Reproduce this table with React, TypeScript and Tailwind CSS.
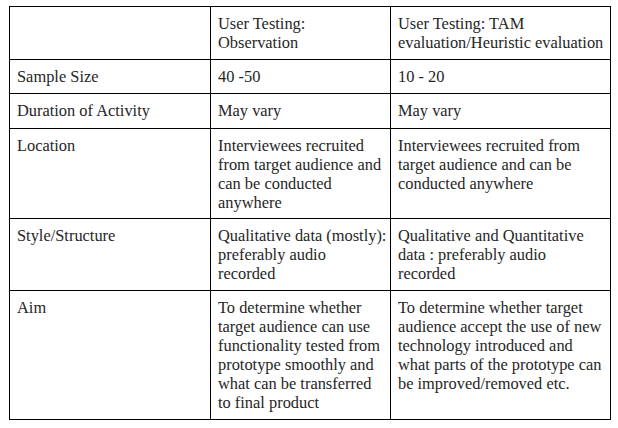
import React from "react";

const rows: { label: string; a: string[]; b: string[] }[] = [
  { label: "Sample Size", a: ["40 -50"], b: ["10 - 20"] },
  { label: "Duration of Activity", a: ["May vary"], b: ["May vary"] },
  {
    label: "Location",
    a: ["Interviewees recruited", "from target audience and", "can be conducted", "anywhere"],
    b: ["Interviewees recruited from", "target audience and can be", "conducted anywhere"],
  },
  {
    label: "Style/Structure",
    a: ["Qualitative data (mostly):", "preferably audio", "recorded"],
    b: ["Qualitative and Quantitative", "data : preferably audio", "recorded"],
  },
  {
    label: "Aim",
    a: [
      "To determine whether",
      "target audience can use",
      "functionality tested from",
      "prototype smoothly and",
      "what can be transferred",
      "to final product",
    ],
    b: [
      "To determine whether target",
      "audience accept the use of new",
      "technology introduced and",
      "what parts of the prototype can",
      "be improved/removed etc.",
    ],
  },
];

function Lines({ lines }: { lines: string[] }) {
  return (
    <>
      {lines.map((l, i) => (
        <div key={i} className="whitespace-nowrap font-['Liberation_Serif',serif]">
          {l}
        </div>
      ))}
    </>
  );
}

const cell = "border-r border-b border-black px-[7px] pt-[7px] overflow-hidden";

export default function App() {
  return (
    <div className="w-[618px] h-[428px] bg-white pt-[6px] pl-[9px] font-['Liberation_Serif',serif]">
      <div className="grid grid-cols-[201px_180px_220px] grid-rows-[53px_34px_35px_90px_72px_129px] w-[602px] border-l border-t border-black text-[#262626] text-[16.4px] leading-[19px]">
        <div className={cell}></div>
        <div className={cell}>
          <Lines lines={["User Testing:", "Observation"]} />
        </div>
        <div className={cell}>
          <Lines lines={["User Testing: TAM", "evaluation/Heuristic evaluation"]} />
        </div>
        {rows.map((r) => (
          <React.Fragment key={r.label}>
            <div className={cell}>
              <Lines lines={[r.label]} />
            </div>
            <div className={cell}>
              <Lines lines={r.a} />
            </div>
            <div className={cell}>
              <Lines lines={r.b} />
            </div>
          </React.Fragment>
        ))}
      </div>
    </div>
  );
}
